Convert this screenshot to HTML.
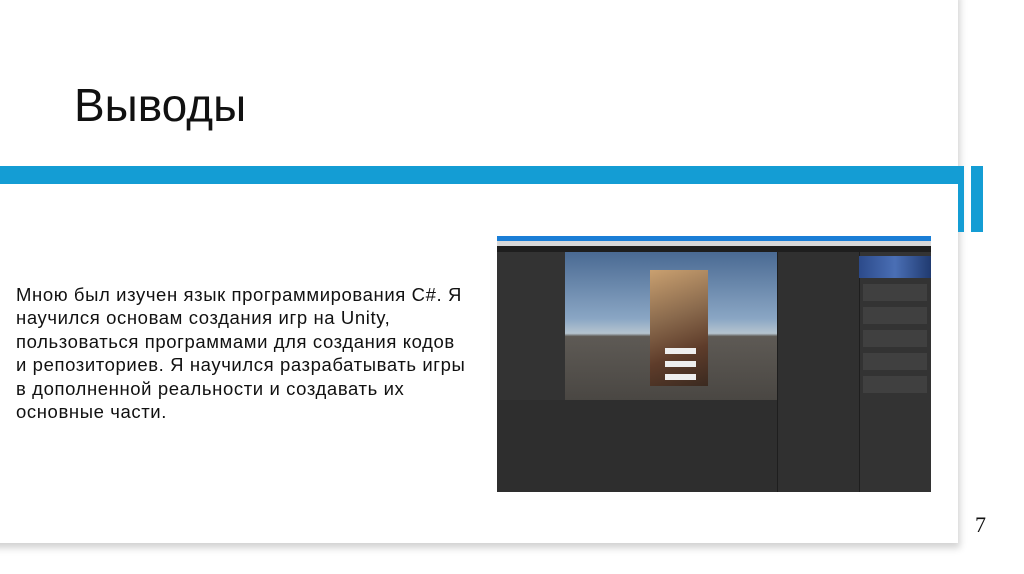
<!DOCTYPE html>
<html><head><meta charset="utf-8"><style>
*{margin:0;padding:0;box-sizing:border-box}
body{width:1024px;height:574px;background:#fff;position:relative;overflow:hidden;font-family:"Liberation Sans",sans-serif}
.card{position:absolute;left:-10px;top:-10px;width:968px;height:553px;background:#fff;box-shadow:2px 5px 7px rgba(0,0,0,.18)}
.bar{position:absolute;left:0;top:166px;width:963px;height:18px;background:#149dd4}
.v1{position:absolute;left:958px;top:166px;width:6px;height:66px;background:#149dd4}
.v2{position:absolute;left:971px;top:166px;width:12px;height:66px;background:#149dd4}
h1{position:absolute;left:74px;top:78px;font-size:46px;font-weight:normal;color:#111}
.txt{position:absolute;left:16px;top:283px;font-size:18.5px;line-height:23.4px;color:#111;white-space:nowrap;letter-spacing:0.6px}
.num{position:absolute;left:975px;top:512px;font-family:"Liberation Serif",serif;font-size:22px;color:#111}
.shot{position:absolute;left:497px;top:236px;width:434px;height:256px;background:#2a2a2a;overflow:hidden}
</style></head><body>
<div class="card"></div>
<div class="bar"></div><div class="v1"></div><div class="v2"></div>
<h1>Выводы</h1>
<div class="txt">Мною был изучен язык программирования C#. Я<br>научился основам создания игр на Unity,<br>пользоваться программами для создания кодов<br>и репозиториев. Я научился разрабатывать игры<br>в дополненной реальности и создавать их<br>основные части.</div>
<div class="shot">
 <div style="position:absolute;left:0;top:0;width:434px;height:5px;background:#1a7ed6"></div>
 <div style="position:absolute;left:0;top:5px;width:434px;height:5px;background:#d8d8d8"></div>
 <div style="position:absolute;left:0;top:10px;width:434px;height:6px;background:#1e1e1e"></div>
 <div style="position:absolute;left:0;top:16px;width:68px;height:148px;background:#333"></div>
 <div style="position:absolute;left:68px;top:16px;width:212px;height:148px;background:linear-gradient(#4a6a93 0%,#8aa6c4 45%,#b5c4cf 55%,#5e5a55 57%,#4a4743 100%)"></div>
 <div style="position:absolute;left:153px;top:34px;width:58px;height:116px;background:linear-gradient(160deg,#c9a070,#8a6a4d 40%,#5e3c2a 70%,#3b2a20)"></div>
 <div style="position:absolute;left:168px;top:112px;width:31px;height:6px;background:#eee"></div>
 <div style="position:absolute;left:168px;top:125px;width:31px;height:6px;background:#eee"></div>
 <div style="position:absolute;left:168px;top:138px;width:31px;height:6px;background:#eee"></div>
 <div style="position:absolute;left:0;top:164px;width:280px;height:92px;background:#2e2e2e"></div>
 <div style="position:absolute;left:280px;top:16px;width:82px;height:240px;background:#303030;border-left:1px solid #1e1e1e"></div>
 <div style="position:absolute;left:362px;top:16px;width:72px;height:240px;background:#333;border-left:1px solid #1e1e1e"></div>
 <div style="position:absolute;left:362px;top:20px;width:72px;height:22px;background:linear-gradient(90deg,#2c4a8a,#4a6fb5,#203a70)"></div>
 <div style="position:absolute;left:366px;top:48px;width:64px;height:17px;background:#404040"></div>
 <div style="position:absolute;left:366px;top:71px;width:64px;height:17px;background:#404040"></div>
 <div style="position:absolute;left:366px;top:94px;width:64px;height:17px;background:#404040"></div>
 <div style="position:absolute;left:366px;top:117px;width:64px;height:17px;background:#404040"></div>
 <div style="position:absolute;left:366px;top:140px;width:64px;height:17px;background:#404040"></div>
</div>
<div class="num">7</div>
</body></html>
